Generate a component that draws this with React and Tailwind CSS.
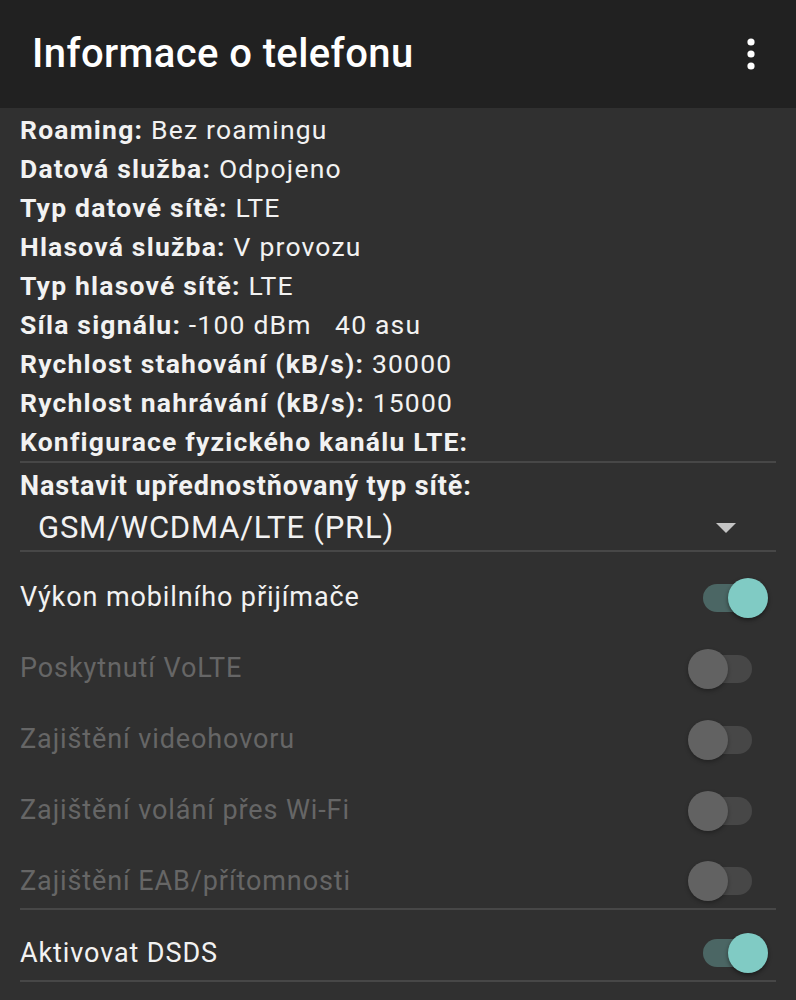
import React from "react";

const info = [
  ["Roaming:", "Bez roamingu"],
  ["Datová služba:", "Odpojeno"],
  ["Typ datové sítě:", "LTE"],
  ["Hlasová služba:", "V provozu"],
  ["Typ hlasové sítě:", "LTE"],
  ["Síla signálu:", "-100 dBm\u00a0\u00a0\u00a040 asu"],
  ["Rychlost stahování (kB/s):", "30000"],
  ["Rychlost nahrávání (kB/s):", "15000"],
  ["Konfigurace fyzického kanálu LTE:", ""],
];

function Toggle({ on }) {
  return (
    <div className="relative w-[80px] h-[40px] shrink-0">
      <div
        className={
          "absolute left-[15px] right-[16px] top-[6px] h-[28px] rounded-full " +
          (on ? "bg-[#4b6664]" : "bg-[#474747]")
        }
      />
      <div
        className={
          "absolute top-0 w-[40px] h-[40px] rounded-full " +
          (on
            ? "right-0 bg-[#80cbc4] shadow-[0_2px_4px_rgba(0,0,0,0.45)]"
            : "left-0 bg-[#626262] shadow-[0_2px_4px_rgba(0,0,0,0.3)]")
        }
      />
    </div>
  );
}

function SwitchRow({ label, on, disabled, className }) {
  return (
    <div className={"flex items-center justify-between pl-[20px] pr-[28px] " + className}>
      <span
        className={
          "text-[27px] tracking-[0.9px] " + (disabled ? "text-[#666666]" : "text-[#f2f2f2]")
        }
      >
        {label}
      </span>
      <Toggle on={on} />
    </div>
  );
}

export default function App() {
  return (
    <div className="w-[796px] h-[1000px] bg-[#303030] font-['Roboto',sans-serif] overflow-hidden">
      {/* App bar */}
      <div className="h-[108px] bg-[#212121] flex items-center justify-between pl-[32px] pr-[38px]">
        <h1 className="text-[40px] font-medium text-white tracking-[0.4px]">Informace o telefonu</h1>
        <svg width="14" height="40" viewBox="0 0 14 40">
          <circle cx="7" cy="8" r="3.6" fill="#fff" />
          <circle cx="7" cy="20" r="3.6" fill="#fff" />
          <circle cx="7" cy="32" r="3.6" fill="#fff" />
        </svg>
      </div>

      {/* Phone status */}
      <div className="pt-[2px] px-[20px]">
        {info.map(([k, v]) => (
          <div key={k} className="h-[39px] leading-[39px] text-[26.5px] tracking-[1.2px] text-[#f2f2f2] whitespace-nowrap">
            <span className="font-bold">{k}</span> {v}
          </div>
        ))}
      </div>
      <div className="mx-[20px] h-[2px] bg-[#474747]" />

      {/* Preferred network */}
      <div className="px-[20px] mt-[3px] h-[40px] leading-[40px] text-[27px] tracking-[0.9px] font-bold text-[#f2f2f2] whitespace-nowrap">
        Nastavit upřednostňovaný typ sítě:
      </div>
      <div className="h-[44px] flex items-center justify-between pl-[38px] pr-[60px]">
        <span className="text-[31px] text-[#f2f2f2] tracking-[0.8px]">GSM/WCDMA/LTE (PRL)</span>
        <svg width="20" height="10" viewBox="0 0 20 10">
          <path d="M0 0 H20 L10 10 Z" fill="#c4c4c4" />
        </svg>
      </div>
      <div className="mx-[20px] h-[2px] bg-[#474747]" />

      {/* Switches */}
      <div className="pt-[10px]">
        <SwitchRow label="Výkon mobilního přijímače" on className="h-[71px]" />
        <SwitchRow label="Poskytnutí VoLTE" disabled className="h-[71px]" />
        <SwitchRow label="Zajištění videohovoru" disabled className="h-[71px]" />
        <SwitchRow label="Zajištění volání přes Wi-Fi" disabled className="h-[71px]" />
        <SwitchRow label="Zajištění EAB/přítomnosti" disabled className="h-[62px] pt-[8px]" />
      </div>
      <div className="mx-[20px] h-[2px] bg-[#474747]" />
      <SwitchRow label="Aktivovat DSDS" on className="h-[70px] pt-[16px]" />
      <div className="mx-[20px] h-[2px] bg-[#474747]" />
    </div>
  );
}
